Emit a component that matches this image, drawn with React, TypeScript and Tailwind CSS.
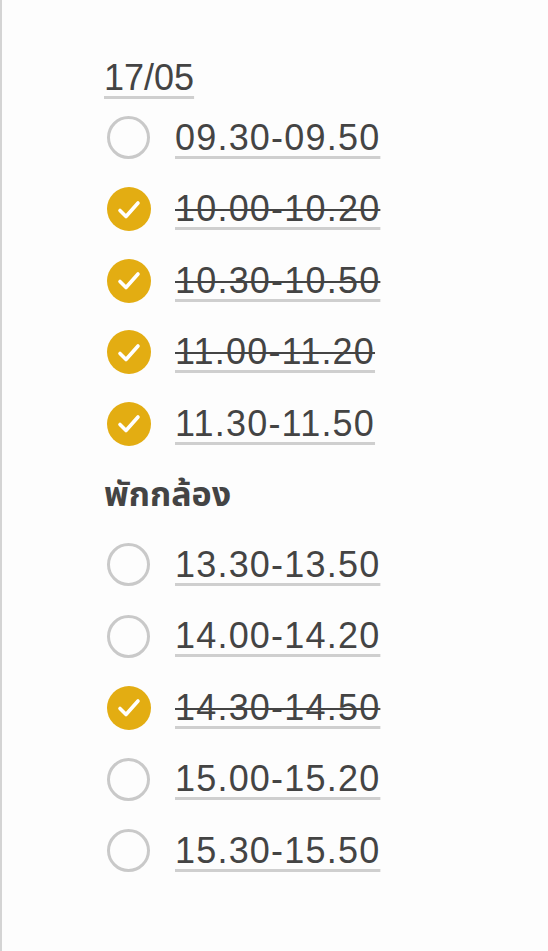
const morning = [
  { time: "09.30-09.50", checked: false, done: false },
  { time: "10.00-10.20", checked: true, done: true },
  { time: "10.30-10.50", checked: true, done: true },
  { time: "11.00-11.20", checked: true, done: true },
  { time: "11.30-11.50", checked: true, done: false },
];

const afternoon = [
  { time: "13.30-13.50", checked: false, done: false },
  { time: "14.00-14.20", checked: false, done: false },
  { time: "14.30-14.50", checked: true, done: true },
  { time: "15.00-15.20", checked: false, done: false },
  { time: "15.30-15.50", checked: false, done: false },
];

function CheckCircle({ checked }: { checked: boolean }) {
  if (checked) {
    return (
      <div className="flex items-center justify-center w-[44px] h-[44px] rounded-full bg-[#e3ad12]">
        <svg width="26" height="22" className="shrink-0 mt-[1px]" viewBox="0 0 26 22" fill="none">
          <path
            d="M4 11.5 L10 17.5 L22 4"
            stroke="white"
            strokeWidth="3.6"
            strokeLinecap="round"
            strokeLinejoin="round"
          />
        </svg>
      </div>
    );
  }
  return (
    <div className="w-[43px] h-[43px] rounded-full border-[3px] border-[#c9c9c9]" />
  );
}

function SlotRow({ time, checked, done }: { time: string; checked: boolean; done: boolean }) {
  return (
    <div className="flex items-center h-[71.5px]">
      <div className="w-[71px] flex items-center pl-[3px]">
        <CheckCircle checked={checked} />
      </div>
      <span className="text-[36px] leading-none tracking-[1.2px] text-[#444] underline decoration-[#cfcfcf] decoration-[3px] underline-offset-[6px]">
        {done ? (
          <span className="line-through decoration-[#444] decoration-[2px]">{time}</span>
        ) : (
          time
        )}
      </span>
    </div>
  );
}

export default function App() {
  return (
    <div
      className="min-h-[951px] w-[548px] bg-[#fdfdfd] border-l-2 border-[#d4d4d4] pl-[102px] pt-[54px]"
      style={{ fontFamily: '"Liberation Sans", "Noto Sans Thai", "Noto Sans", sans-serif' }}
    >
      <div className="h-[48px] flex items-center">
        <span className="text-[36px] leading-none text-[#444] underline decoration-[#cfcfcf] decoration-[3px] underline-offset-[6px]">
          17/05
        </span>
      </div>
      {morning.map((s) => (
        <SlotRow key={s.time} {...s} />
      ))}
      <div className="h-[69.5px] flex items-center">
        <span className="text-[34px] font-bold leading-none text-[#444]">พักกล้อง</span>
      </div>
      {afternoon.map((s) => (
        <SlotRow key={s.time} {...s} />
      ))}
    </div>
  );
}
